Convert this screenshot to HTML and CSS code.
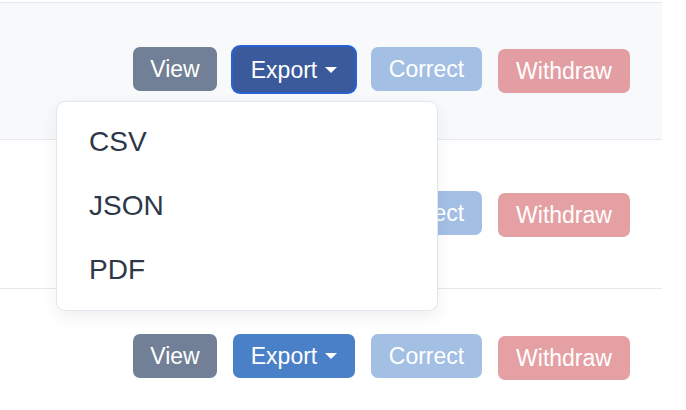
FILE: index.html
```html
<!DOCTYPE html>
<html>
<head>
<meta charset="utf-8">
<link rel="stylesheet" href="styles.css">
</head>
<body>
<div class="table">
  <div class="row row--first row--shaded">
    <div class="actions">
      <button class="btn btn--view">View</button>
      <div class="export-wrap">
        <button class="btn btn--export btn--focused">Export <span class="caret"></span></button>
        <div class="menu">
          <div class="menu__item">CSV</div>
          <div class="menu__item">JSON</div>
          <div class="menu__item">PDF</div>
        </div>
      </div>
      <button class="btn btn--correct">Correct</button>
      <button class="btn btn--withdraw">Withdraw</button>
    </div>
  </div>
  <div class="row row--second">
    <div class="actions">
      <button class="btn btn--view">View</button>
      <button class="btn btn--export">Export <span class="caret"></span></button>
      <button class="btn btn--correct">Correct</button>
      <button class="btn btn--withdraw">Withdraw</button>
    </div>
  </div>
  <div class="row row--third">
    <div class="actions">
      <button class="btn btn--view">View</button>
      <button class="btn btn--export">Export <span class="caret"></span></button>
      <button class="btn btn--correct">Correct</button>
      <button class="btn btn--withdraw">Withdraw</button>
    </div>
  </div>
</div>
</body>
</html>
```
FILE: styles.css
```css
* { box-sizing: border-box; }
html, body {
  margin: 0;
  padding: 0;
  background: #ffffff;
  font-family: "Liberation Sans", Arial, Helvetica, sans-serif;
}
.table {
  width: 662px;
  padding-top: 2px;
}
.row {
  display: flex;
  justify-content: flex-end;
  align-items: flex-start;
  padding-right: 32px;
  border-top: 1px solid #e5e8ee;
}
.row--shaded { background: #f8f9fb; }
.row--first { height: 137px; padding-top: 44px; }
.row--second { height: 149px; padding-top: 51px; }
.row--third { height: 122px; padding-top: 45px; }
.actions {
  display: flex;
  align-items: flex-start;
  gap: 16px;
}
.export-wrap { position: relative; }
.btn {
  height: 44px;
  padding: 0 16px;
  border: none;
  border-radius: 7px;
  color: #ffffff;
  font-family: "Liberation Sans", Arial, Helvetica, sans-serif;
  font-size: 23px;
  line-height: 44px;
  display: flex;
  align-items: center;
  justify-content: center;
  cursor: pointer;
}
.btn--view { background: #718096; width: 84px; }
.btn--export { background: #4a80c8; width: 122px; height: 44px; }
.btn--focused {
  background: #3a5a9c;
  box-shadow: 0 0 0 2px #2b62d3;
  height: 45px;
}
.btn--correct { background: #a3bfe3; width: 111px; }
.btn--withdraw { background: #e5a0a3; margin-top: 2px; width: 132px; }
.row--shaded .btn--withdraw { background: #e29ea2; }
.caret {
  width: 0;
  height: 0;
  margin-left: 8px;
  border-left: 6px solid transparent;
  border-right: 6px solid transparent;
  border-top: 6px solid #ffffff;
}
.menu {
  position: absolute;
  top: 54px;
  left: -177px;
  width: 382px;
  padding: 8px 0;
  background: #ffffff;
  border: 1px solid #e2e7ef;
  border-radius: 9px;
  box-shadow: 0 6px 16px rgba(30, 40, 60, 0.07);
  z-index: 10;
}
.menu__item {
  height: 64px;
  line-height: 64px;
  padding-left: 32px;
  font-size: 28px;
  color: #2d3748;
}
```
